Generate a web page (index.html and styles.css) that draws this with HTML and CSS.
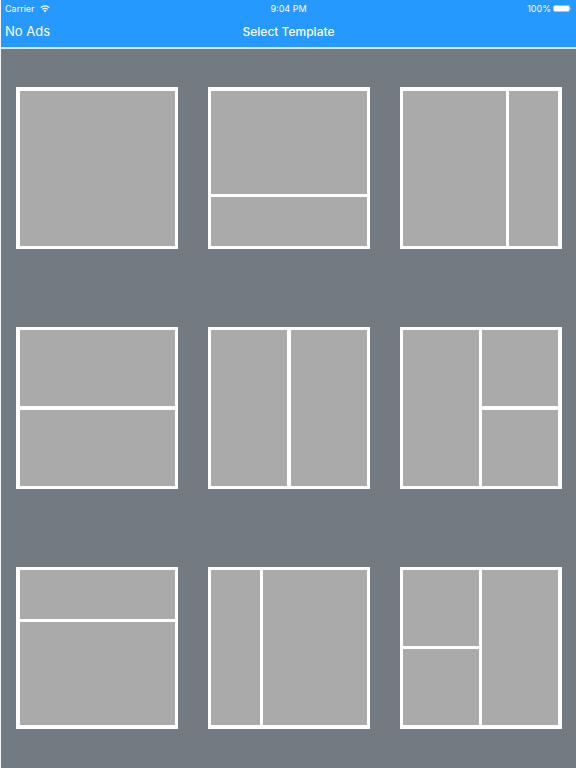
FILE: index.html
```html
<!DOCTYPE html>
<html lang="en">
<head>
<meta charset="utf-8">
<meta name="viewport" content="width=device-width, initial-scale=1">
<title>Select Template</title>
<link rel="stylesheet" href="styles.css">
</head>
<body>
<header class="header">
  <div class="status">
    <div class="carrier">
      <span>Carrier</span>
      <svg class="wifi" viewBox="0 0 10 8" aria-hidden="true">
        <path d="M.7 2.7Q5-1 9.3 2.7M2.2 4.4Q5 2 7.8 4.4" fill="none" stroke="currentColor" stroke-width="1.1"/>
        <path d="M3.4 5.6Q5 4.2 6.6 5.6L5 7.4Z" fill="currentColor"/>
      </svg>
    </div>
    <time class="clock">9:04 PM</time>
    <div class="power">
      <span>100%</span>
      <svg class="battery" viewBox="0 0 19 7" aria-hidden="true">
        <rect x=".5" y=".5" width="16" height="6" rx="1.5" fill="none" stroke="currentColor" stroke-opacity=".5"/>
        <rect x="1" y="1" width="15" height="5" rx=".8" fill="currentColor"/>
        <path d="M17.5 2.2Q18.8 3.5 17.5 4.8Z" fill="currentColor"/>
      </svg>
    </div>
  </div>
  <nav class="navbar">
    <button class="no-ads" type="button">No Ads</button>
    <h1 class="title">Select Template</h1>
  </nav>
</header>
<main class="templates">
  <button class="tile first-row first-col" type="button" aria-label="Single"><span class="cell"></span></button>
  <button class="tile first-row rows-2-1" type="button" aria-label="Large top"><span class="cell"></span><span class="cell"></span></button>
  <button class="tile first-row last-col cols-2-1" type="button" aria-label="Large left"><span class="cell"></span><span class="cell"></span></button>
  <button class="tile first-col rows-1-1" type="button" aria-label="Two rows"><span class="cell"></span><span class="cell"></span></button>
  <button class="tile cols-1-1" type="button" aria-label="Two columns"><span class="cell"></span><span class="cell"></span></button>
  <button class="tile last-col split-right" type="button" aria-label="Split right"><span class="cell tall"></span><span class="cell"></span><span class="cell"></span></button>
  <button class="tile last-row first-col rows-1-2" type="button" aria-label="Large bottom"><span class="cell"></span><span class="cell"></span></button>
  <button class="tile last-row cols-1-2" type="button" aria-label="Large right"><span class="cell"></span><span class="cell"></span></button>
  <button class="tile last-row last-col split-left" type="button" aria-label="Split left"><span class="cell"></span><span class="cell tall"></span><span class="cell"></span></button>
</main>
</body>
</html>
```
FILE: styles.css
```css
* {
  box-sizing: border-box;
}

body {
  min-height: 100vh;
  margin: 0;
  border-left: 1px solid #f4f6f8;
  background: #727b82;
  font-family: Inter, Roboto, sans-serif;
}

.header {
  border-bottom: 2px solid #dfe5e8;
  background: #2699ff;
  color: #fff;
}

.status,
.navbar {
  display: grid;
  grid-template-columns: 1fr auto 1fr;
  align-items: center;
  padding: 0 4px;
}

.status {
  height: 17px;
  font-size: 9px;
  font-weight: 400;
  line-height: 16px;
}

.carrier,
.power {
  display: flex;
  align-items: center;
  gap: 5px;
}

.power {
  justify-content: flex-end;
  gap: 2px;
}

.wifi {
  width: 10px;
  height: 8px;
}

.battery {
  width: 19px;
  height: 7px;
}

.navbar {
  height: 30px;
}

.no-ads {
  justify-self: start;
  padding: 0 0 2px;
  border: 0;
  background: none;
  color: inherit;
  font: 400 13px/28px Inter, Roboto, sans-serif;
}

.title {
  margin: 0;
  font-size: 12px;
  font-weight: 500;
  line-height: 30px;
}

.templates {
  display: grid;
  grid-template-columns: repeat(3, 1fr);
  gap: 78px 30px;
  padding: 38px 14px 39px 15px;
}

.tile {
  display: grid;
  gap: 3px;
  width: 100%;
  aspect-ratio: 1;
  padding: 3px;
  border: 0;
  border-radius: 0;
  background: #fff;
}

.first-row {
  padding-top: 4px;
}

.last-row {
  padding-bottom: 4px;
}

.first-col {
  padding-left: 4px;
}

.last-col {
  padding-right: 4px;
}

.cell {
  background: #aaa;
}

.rows-1-1 {
  grid-template-rows: 1fr 1fr;
  row-gap: 4px;
}

.rows-2-1 {
  grid-template-rows: 2.1fr 1fr;
}

.rows-1-2 {
  grid-template-rows: 1fr 2.1fr;
}

.cols-1-1 {
  grid-template-columns: 1fr 1fr;
  column-gap: 4px;
}

.cols-2-1 {
  grid-template-columns: 2.1fr 1fr;
}

.cols-1-2 {
  grid-template-columns: 1fr 2.1fr;
}

.split-left,
.split-right {
  grid-template: 1fr 1fr / 1fr 1fr;
}

.split-right {
  row-gap: 4px;
}

.tall {
  grid-row: span 2;
}
```
